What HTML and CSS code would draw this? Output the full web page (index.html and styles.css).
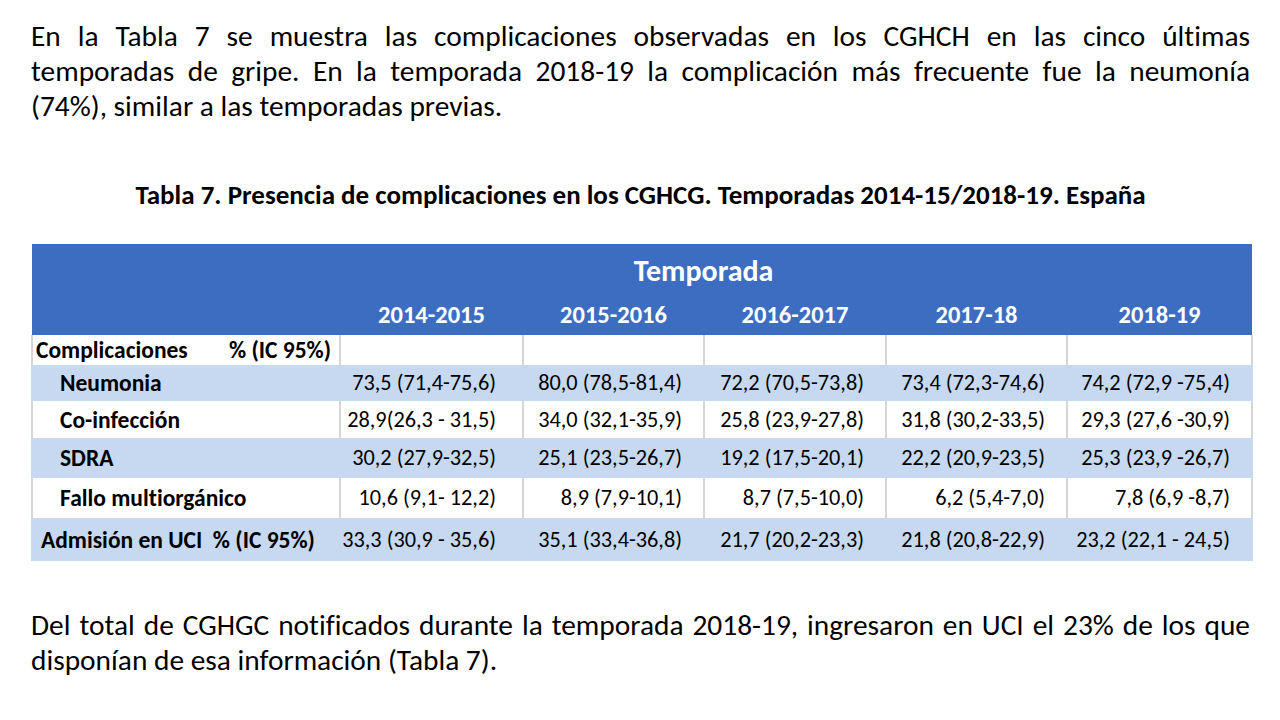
FILE: index.html
```html
<!DOCTYPE html>
<html lang="es">
<head>
<meta charset="utf-8">
<title>Tabla 7</title>
<link rel="stylesheet" href="styles.css">
</head>
<body>
<main class="page">
  <p class="para para-top">
    <span class="jline">En la Tabla 7 se muestra las complicaciones observadas en los CGHCH en las cinco últimas</span>
    <span class="jline">temporadas de gripe. En la temporada 2018-19 la complicación más frecuente fue la neumonía</span>
    <span class="lline">(74%), similar a las temporadas previas.</span>
  </p>

  <h2 class="caption">Tabla 7. Presencia de complicaciones en los CGHCG. Temporadas 2014-15/2018-19. España</h2>

  <table class="data">
    <colgroup>
      <col class="c-label">
      <col class="c-a">
      <col class="c-b">
      <col class="c-c">
      <col class="c-d">
      <col class="c-e">
    </colgroup>
    <thead>
      <tr class="h-top">
        <th></th>
        <th colspan="4" class="h-temp">Temporada</th>
        <th></th>
      </tr>
      <tr class="h-years">
        <th></th>
        <th>2014-2015</th>
        <th>2015-2016</th>
        <th>2016-2017</th>
        <th>2017-18</th>
        <th>2018-19</th>
      </tr>
    </thead>
    <tbody>
      <tr class="r-white r-comp">
        <td class="lbl lbl-comp"><span class="comp-name">Complicaciones</span><span>% (IC 95%)</span></td>
        <td></td><td></td><td></td><td></td><td></td>
      </tr>
      <tr class="r-blue r-neu">
        <td class="lbl lbl-sub">Neumonia</td>
        <td>73,5 (71,4-75,6)</td>
        <td>80,0 (78,5-81,4)</td>
        <td>72,2 (70,5-73,8)</td>
        <td>73,4 (72,3-74,6)</td>
        <td>74,2 (72,9 -75,4)</td>
      </tr>
      <tr class="r-white r-co">
        <td class="lbl lbl-sub">Co-infección</td>
        <td>28,9(26,3 - 31,5)</td>
        <td>34,0 (32,1-35,9)</td>
        <td>25,8 (23,9-27,8)</td>
        <td>31,8 (30,2-33,5)</td>
        <td>29,3 (27,6 -30,9)</td>
      </tr>
      <tr class="r-blue r-sdra">
        <td class="lbl lbl-sub">SDRA</td>
        <td>30,2 (27,9-32,5)</td>
        <td>25,1 (23,5-26,7)</td>
        <td>19,2 (17,5-20,1)</td>
        <td>22,2 (20,9-23,5)</td>
        <td>25,3 (23,9 -26,7)</td>
      </tr>
      <tr class="r-white r-fallo">
        <td class="lbl lbl-sub">Fallo multiorgánico</td>
        <td>10,6 (9,1- 12,2)</td>
        <td>8,9 (7,9-10,1)</td>
        <td>8,7 (7,5-10,0)</td>
        <td>6,2 (5,4-7,0)</td>
        <td>7,8 (6,9 -8,7)</td>
      </tr>
      <tr class="r-blue r-uci">
        <td class="lbl lbl-uci">Admisión en UCI&nbsp; % (IC 95%)</td>
        <td>33,3 (30,9 - 35,6)</td>
        <td>35,1 (33,4-36,8)</td>
        <td>21,7 (20,2-23,3)</td>
        <td>21,8 (20,8-22,9)</td>
        <td>23,2 (22,1 - 24,5)</td>
      </tr>
    </tbody>
  </table>

  <p class="para para-bottom">
    <span class="jline">Del total de CGHGC notificados durante la temporada 2018-19, ingresaron en UCI el 23% de los que</span>
    <span class="lline">disponían de esa información (Tabla 7).</span>
  </p>
</main>
</body>
</html>
```

FILE: styles.css
```css
html, body {
  margin: 0;
  padding: 0;
  background: #ffffff;
}

.page {
  width: 1280px;
  height: 720px;
  box-sizing: border-box;
  padding: 0 30px 0 31px;
  font-family: Carlito, Lato, "Open Sans", "Liberation Sans", sans-serif;
  font-variant-ligatures: no-common-ligatures;
  color: #000000;
  overflow: hidden;
}

.para {
  margin: 0;
  font-size: 29.4px;
  line-height: 35px;
}

.jline {
  display: block;
  text-align: justify;
  text-align-last: justify;
}

.lline {
  display: block;
  text-align: left;
}

.para-top {
  padding-top: 19px;
}

.caption {
  margin: 55px 0 0 0;
  font-size: 27px;
  line-height: 32px;
  font-weight: 700;
  text-align: center;
}

.data {
  margin-top: 33px;
  width: 1220px;
  border-collapse: collapse;
  table-layout: fixed;
  font-size: 22.3px;
}

.c-label { width: 308px; }
.c-a { width: 183px; }
.c-b { width: 181px; }
.c-c { width: 182px; }
.c-d { width: 181px; }
.c-e { width: 185px; }

.data th,
.data td {
  padding: 0;
  white-space: nowrap;
}

.data thead th {
  background: #3d6dc0;
  color: #ffffff;
  font-weight: 700;
  text-align: center;
}

.h-top th {
  height: 46px;
  vertical-align: middle;
}

.h-temp {
  font-size: 30px;
  line-height: 34px;
  padding-top: 4px !important;
}

.h-years th {
  height: 41px;
  font-size: 24.5px;
  line-height: 30px;
  vertical-align: middle;
}

.data tbody td {
  text-align: right;
  padding-right: 21px;
  vertical-align: middle;
  line-height: 28px;
}

.data tbody td:nth-child(2) {
  padding-right: 26px;
}

.r-white td {
  background: #ffffff;
  border-left: 2px solid #d6d6d6;
  border-right: 2px solid #d6d6d6;
}

.r-blue td {
  background: #c6d9f0;
  border-left: 2px solid #c6d9f0;
  border-right: 2px solid #c6d9f0;
}

.r-comp td { height: 30px; }
.r-neu td { height: 36px; }
.r-co td { height: 37px; }
.r-sdra td { height: 40px; }
.r-fallo td { height: 40px; }
.r-uci td { height: 43px; }

.data tbody td.lbl {
  text-align: left;
  font-weight: 700;
  font-size: 23.5px;
  padding-right: 0;
}

.data tbody td.lbl-comp {
  padding-left: 3px;
}

.comp-name {
  display: inline-block;
  width: 193px;
}

.data tbody td.lbl-sub {
  padding-left: 27px;
}

.data tbody td.lbl-uci {
  padding-left: 8px;
}

.para-bottom {
  margin-top: 47px;
}
```
